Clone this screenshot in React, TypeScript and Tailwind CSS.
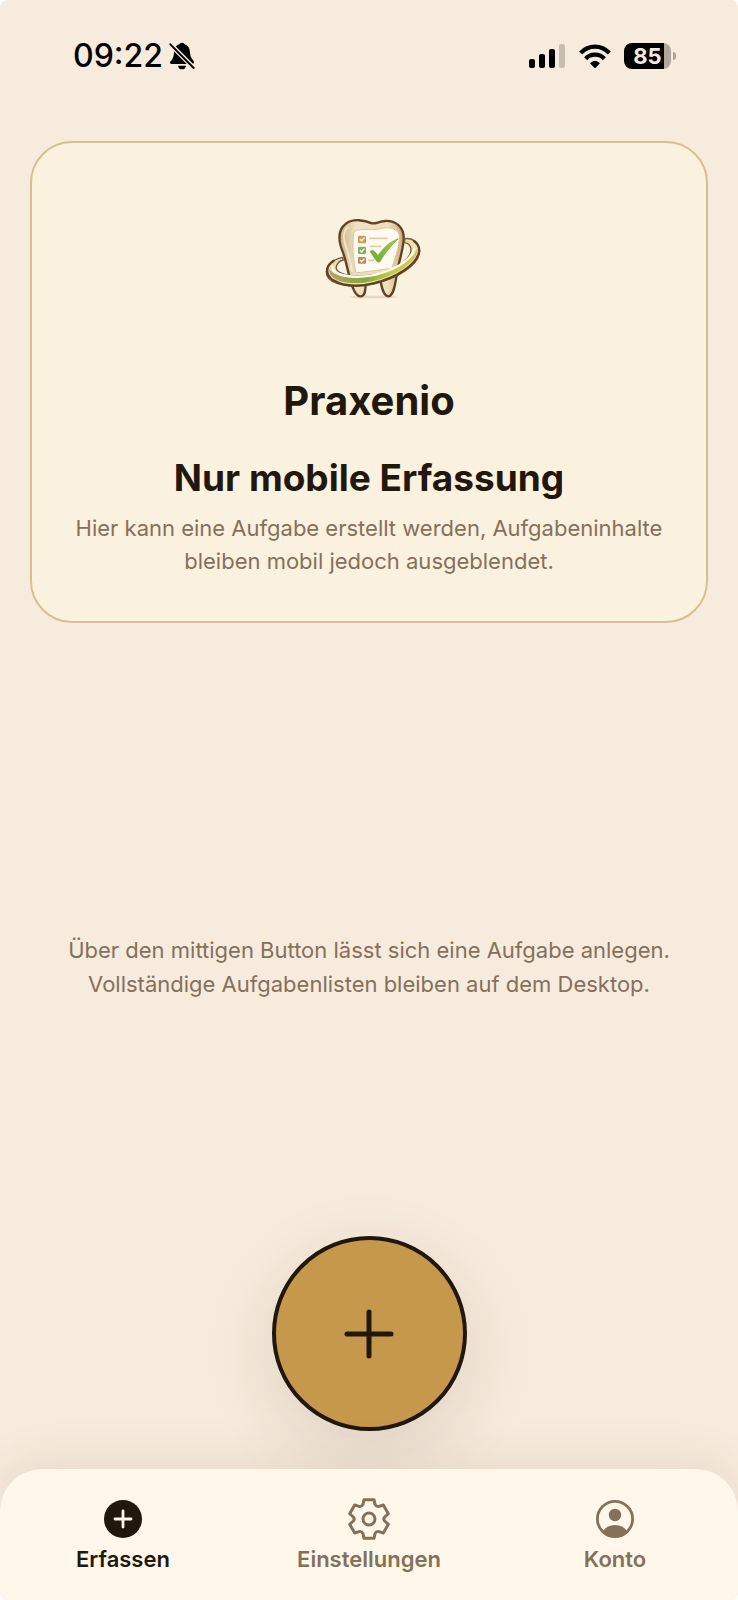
import { ReactNode, useState } from "react";

const ToothLogo = () => (
  <svg viewBox="0 0 354 330" className="h-[110px] w-[118px]" aria-hidden="true">
    <defs>
      <linearGradient id="enamel" x1="0" y1="0" x2="1" y2="0">
        <stop offset="0" stopColor="#c9b184" />
        <stop offset="0.25" stopColor="#f0e0bf" />
        <stop offset="0.75" stopColor="#f1e0bd" />
        <stop offset="1" stopColor="#c9ac7a" />
      </linearGradient>
      <linearGradient id="ring" x1="0" y1="0" x2="1" y2="0">
        <stop offset="0" stopColor="#e8d5ac" />
        <stop offset="0.3" stopColor="#f4edc9" />
        <stop offset="0.8" stopColor="#e9d992" />
        <stop offset="1" stopColor="#f3e6c0" />
      </linearGradient>
      <linearGradient id="stripe" x1="0" y1="0" x2="1" y2="0">
        <stop offset="0" stopColor="#b5a365" />
        <stop offset="0.4" stopColor="#86a936" />
        <stop offset="0.7" stopColor="#c3cc4c" />
        <stop offset="1" stopColor="#d9c254" />
      </linearGradient>
      <linearGradient id="check" x1="0" y1="1" x2="1" y2="0">
        <stop offset="0" stopColor="#6aab2c" />
        <stop offset="1" stopColor="#a4cf4c" />
      </linearGradient>
    </defs>
    <ellipse cx="190" cy="291" rx="72" ry="4" fill="#dccdb2" opacity="0.7" />
    <path
      d="M186 70C165 61 130 54 108 71C85 88 84 120 98 155C110 185 112 215 122 240C127 268 139 291 154 289C170 286 163 262 170 245C177 232 205 232 212 245C216 265 221 290 236 289C252 285 256 250 260 225C264 190 281 150 281 113C281 80 255 61 225 63C205 65 197 72 186 70Z"
      fill="url(#enamel)"
      stroke="#5f4329"
      strokeWidth="7"
      strokeLinejoin="round"
    />
    <path
      d="M114 82C98 92 99 120 110 148C120 176 122 195 126 212"
      fill="none"
      stroke="#fff8e8"
      strokeWidth="6"
      strokeLinecap="round"
      opacity="0.6"
    />
    <path
      d="M140 91C165 84 188 92 206 87C230 80 262 82 268 105C270 140 252 180 246 205L138 219C128 175 128 130 131 101Q133 93 140 91Z"
      fill="#fffaf0"
      stroke="#d9c7a2"
      strokeWidth="3"
    />
    <rect x="144" y="107" width="24" height="23" rx="3" fill="#cf9a5a" />
    <rect x="144" y="140" width="24" height="22" rx="3" fill="#7cb45e" />
    <rect x="144" y="171" width="24" height="20" rx="3" fill="#c08a58" />
    <path
      d="M150 117l5 6 8-10M150 150l5 6 8-10M150 180l5 5 8-9"
      fill="none"
      stroke="#fffaf0"
      strokeWidth="4"
    />
    <path d="M178 115H233M180 139H214M175 181H193" stroke="#dfcdaa" strokeWidth="5" />
    <path
      d="M180 154Q190 147 197 158L204 167C220 143 240 125 265 116C243 136 226 158 209 186Q203 188 199 182Z"
      fill="url(#check)"
      stroke="#6fa336"
      strokeWidth="2"
    />
    <path
      d="M97 172C60 180 43 205 51 227C62 255 130 266 190 252C260 237 331 195 329 150C326 125 305 113 285 116L283 128C301 130 307 146 300 163C280 203 210 226 150 228C105 229 75 215 79 200C82 190 90 182 100 180Z"
      fill="url(#ring)"
      stroke="#7a5a36"
      strokeWidth="4"
      strokeLinejoin="round"
    />
    <path
      d="M60 214C66 245 130 254 187 241C251 227 315 189 321 149C317 178 257 212 187 228C137 239 84 238 60 214Z"
      fill="url(#stripe)"
      stroke="url(#stripe)"
      strokeWidth="5"
    />
    <path
      d="M71 182C45 198 45 226 70 241C104 261 152 259 190 250C256 235 320 196 327 156C329 142 322 130 312 123"
      fill="none"
      stroke="#5f4329"
      strokeWidth="7"
      strokeLinecap="round"
    />
    <path
      d="M67 200C66 225 126 237 186 226C248 213 302 184 313 147"
      fill="none"
      stroke="#fffdf0"
      strokeWidth="7"
      strokeLinecap="round"
    />
  </svg>
);

const BellOffIcon = () => (
  <svg viewBox="0 0 78 84" className="h-7 w-[26px]" aria-hidden="true">
    <path d="M15 27Q18 10 31 7Q32 2 39 2Q46 2 47 7Q62 12 63 31Q63 44 69 51Q75 57 75 61Q75 66 70 66H8Q2 66 3 61Q4 57 9 53Q15 45 15 27Z" />
    <path d="M27 71H51Q49 82 39 82Q29 82 27 71Z" />
    <path d="M0 3L78 81" stroke="#f7ebdd" strokeWidth="14" />
    <path d="M4 7L74 78" stroke="#000" strokeWidth="6" strokeLinecap="round" />
  </svg>
);

const SignalIcon = () => (
  <svg viewBox="0 0 37 24" className="h-6 w-[37px]" aria-hidden="true">
    <rect x="0" y="15" width="6" height="9" rx="2" />
    <rect x="10" y="10" width="6" height="14" rx="2" />
    <rect x="20" y="5" width="6" height="19" rx="2" />
    <rect x="30" y="0" width="6" height="24" rx="2" fill="#c5bdae" />
  </svg>
);

const WifiIcon = () => (
  <svg viewBox="0 0 96 72" className="h-6 w-8" aria-hidden="true">
    <g fill="none" stroke="#000" strokeWidth="13">
      <path d="M5 27Q23 8 48 8T91 27" />
      <path d="M20 44Q31 32 48 32T76 44" />
    </g>
    <path d="M33 58Q40 50 48 50T63 58L50 71Q48 73 46 71Z" />
  </svg>
);

const CaptureIcon = () => (
  <svg viewBox="0 0 42 42" className="size-[42px]" aria-hidden="true">
    <circle cx="21" cy="21" r="19" fill="currentColor" />
    <path
      d="M21 13V29M13 21H29"
      stroke="#fff8ea"
      strokeWidth="2.8"
      strokeLinecap="round"
    />
  </svg>
);

const GearIcon = () => (
  <svg viewBox="-63 -63 126 126" className="size-[42px]" aria-hidden="true">
    <g
      fill="none"
      stroke="currentColor"
      strokeWidth="9"
      strokeLinejoin="round"
      strokeLinecap="round"
    >
      <path d="M-15 -58H15L18 -44Q22 -36 30 -38L43 -42L58 -16L47 -6Q42 0 47 6L58 16L43 42L30 38Q22 36 18 44L15 58H-15L-18 44Q-22 36 -30 38L-43 42L-58 16L-47 6Q-42 0 -47 -6L-58 -16L-43 -42L-30 -38Q-22 -36 -18 -44Z" />
      <circle r="18" />
    </g>
  </svg>
);

const AccountIcon = () => (
  <svg viewBox="0 0 42 42" className="size-[42px]" aria-hidden="true">
    <circle
      cx="21"
      cy="21"
      r="17.6"
      fill="none"
      stroke="currentColor"
      strokeWidth="2.8"
    />
    <circle cx="21" cy="17" r="6.2" fill="currentColor" />
    <path
      d="M9 33Q13 27 21 27T33 33Q28 39 21 39T9 33Z"
      fill="currentColor"
    />
  </svg>
);

const TABS: { id: string; label: string; icon: ReactNode }[] = [
  { id: "capture", label: "Erfassen", icon: <CaptureIcon /> },
  { id: "settings", label: "Einstellungen", icon: <GearIcon /> },
  { id: "account", label: "Konto", icon: <AccountIcon /> },
];

const StatusBar = () => (
  <div className="flex h-28 items-center justify-between pr-[62px] pl-[73px] text-black">
    <div className="flex items-center gap-[6px]">
      <span className="text-[32px] leading-10 font-medium">09:22</span>
      <BellOffIcon />
    </div>
    <div className="flex items-center gap-[13px]">
      <SignalIcon />
      <WifiIcon />
      <div className="flex items-center gap-[2px]">
        <div className="flex h-[26px] w-[47px] items-center justify-center rounded-lg bg-linear-to-r from-black from-85% to-[#b0a69d] to-85% text-[22px] leading-none font-bold text-[#f7ebdd]">
          85
        </div>
        <div className="h-2 w-[3px] rounded-r-full bg-[#b0a69d]" />
      </div>
    </div>
  </div>
);

const TabBar = () => {
  const [active, setActive] = useState(TABS[0].id);

  return (
    <nav className="grid grid-cols-3 rounded-t-[42px] bg-[#fff8ea] pt-[29px] pb-[27px] shadow-[0_-8px_48px_rgba(70,50,30,0.09)]">
      {TABS.map((tab) => (
        <button
          key={tab.id}
          type="button"
          className={`flex flex-col items-center gap-[5px] text-[22px] leading-7 font-semibold ${
            active === tab.id ? "text-[#22170d]" : "text-[#85705a]"
          }`}
          onClick={() => setActive(tab.id)}
        >
          {tab.icon}
          {tab.label}
        </button>
      ))}
    </nav>
  );
};

const App = () => {
  return (
    <div className="flex min-h-screen flex-col overflow-hidden rounded-lg bg-[#f7ebdd] font-['Inter',sans-serif] text-[#22170d]">
      <StatusBar />
      <main className="flex flex-1 flex-col items-center px-[30px] pt-[29px] pb-[38px] text-center">
        <section className="flex w-full flex-col items-center rounded-[42px] border-2 border-[#d6c08f] bg-[#fbf1df] px-8 pt-[57px] pb-[43px]">
          <ToothLogo />
          <h1 className="mt-[67px] text-[40px] leading-[48px] font-bold">
            Praxenio
          </h1>
          <h2 className="mt-[31px] text-[37px] leading-[44px] font-bold">
            Nur mobile Erfassung
          </h2>
          <p className="mt-3 max-w-[600px] text-[22px] leading-[33px] text-[#85705a]">
            Hier kann eine Aufgabe erstellt werden, Aufgabeninhalte bleiben
            mobil jedoch ausgeblendet.
          </p>
        </section>
        <p className="mt-auto max-w-[620px] text-[22px] leading-[34px] text-[#85705a]">
          Über den mittigen Button lässt sich eine Aufgabe anlegen. Vollständige
          Aufgabenlisten bleiben auf dem Desktop.
        </p>
        <button
          type="button"
          aria-label="Aufgabe anlegen"
          className="mt-[235px] flex size-[195px] items-center justify-center rounded-full border-4 border-[#22170d] bg-[#c6984c] shadow-[0_20px_70px_rgba(60,42,25,0.13)]"
        >
          <svg viewBox="0 0 50 50" className="size-[50px]" aria-hidden="true">
            <path
              d="M25 3V47M3 25H47"
              stroke="currentColor"
              strokeWidth="5"
              strokeLinecap="round"
            />
          </svg>
        </button>
      </main>
      <TabBar />
    </div>
  );
};

export default App;
